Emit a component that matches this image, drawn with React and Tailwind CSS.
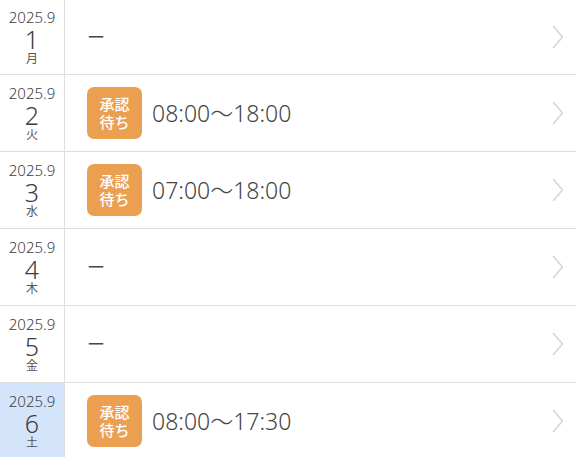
import React from "react";

const days = [
  { d: 1, w: "月", time: null },
  { d: 2, w: "火", time: "08:00〜18:00" },
  { d: 3, w: "水", time: "07:00〜18:00" },
  { d: 4, w: "木", time: null },
  { d: 5, w: "金", time: null },
  { d: 6, w: "土", time: "08:00〜17:30", today: true },
];

const Chevron = () => (
  <svg width="12" height="24" viewBox="0 0 12 24" fill="none">
    <path d="M1.5 1.5 L10.5 12 L1.5 22.5" stroke="#d6d6d6" strokeWidth="1.6" strokeLinecap="round" strokeLinejoin="round" />
  </svg>
);

const Row = ({ day, first }) => (
  <div className={`flex border-b border-[#dedede] ${first ? "h-[75px]" : "h-[77px]"}`}>
    <div
      className={`w-[65px] shrink-0 border-r border-[#dedede] flex flex-col items-center justify-center text-[#3d3d3d] ${
        day.today ? "bg-[#d4e5fb]" : ""
      }`}
    >
      <div className="text-[15px] leading-[18px] font-light">2025.9</div>
      <div className="text-[25px] leading-[26px] font-light">{day.d}</div>
      <div className="text-[12px] leading-[14px] text-[#555]">{day.w}</div>
    </div>
    <div className="flex-1 flex items-center pl-[22px] pr-[12px]">
      {day.time ? (
        <>
          <div className="w-[55px] h-[52px] rounded-[7px] bg-[#eba051] flex flex-col items-center justify-center text-white text-[15px] leading-[18px] font-medium">
            <span>承認</span>
            <span>待ち</span>
          </div>
          <div className="ml-[10px] text-[23px] text-[#454545] font-light">{day.time}</div>
        </>
      ) : (
        <div className="text-[18px] text-[#454545]">ー</div>
      )}
      <div className="ml-auto">
        <Chevron />
      </div>
    </div>
  </div>
);

export default function App() {
  return (
    <div
      className="w-[576px] h-[457px] overflow-hidden bg-white"
      style={{ fontFamily: '"Noto Sans", "Noto Sans CJK JP", sans-serif' }}
    >
      {days.map((day, i) => (
        <Row key={day.d} day={day} first={i === 0} />
      ))}
    </div>
  );
}
